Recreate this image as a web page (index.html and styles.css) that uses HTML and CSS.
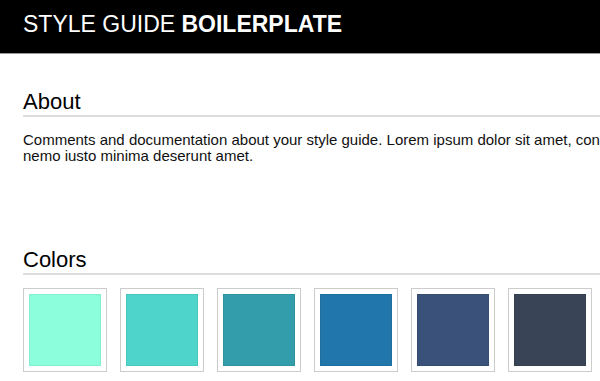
FILE: index.html
```html
<!DOCTYPE html>
<html lang="en">
<head>
  <meta charset="UTF-8">
  <title>Style Guide Boilerplate</title>
  <link rel="stylesheet" href="styles.css">
</head>
<body>
  <header class="sg-header">
    <h1>STYLE GUIDE <strong>BOILERPLATE</strong></h1>
  </header>

  <main class="sg-main">
    <section class="sg-section sg-about">
      <h2 class="sg-title">About</h2>
      <p>Comments and documentation about your style guide. Lorem ipsum dolor sit amet, consectetur adipisicing elit. Voluptatum, eligendi aperiam quis dolorem<br>
      nemo iusto minima deserunt amet.</p>
    </section>

    <section class="sg-section sg-colors">
      <h2 class="sg-title">Colors</h2>
      <div class="swatches">
        <div class="swatch"><div class="chip c1"></div></div>
        <div class="swatch"><div class="chip c2"></div></div>
        <div class="swatch"><div class="chip c3"></div></div>
        <div class="swatch"><div class="chip c4"></div></div>
        <div class="swatch"><div class="chip c5"></div></div>
        <div class="swatch"><div class="chip c6"></div></div>
        <div class="swatch"><div class="chip c7"></div></div>
      </div>
    </section>
  </main>
</body>
</html>
```

FILE: styles.css
```css
html, body {
  overflow: hidden;
}
body {
  margin: 0;
  font-family: "Liberation Sans", Arial, Helvetica, sans-serif;
  color: #111;
  background: #fff;
}
.sg-header {
  background: #000;
  border-bottom: 1px solid #999;
  height: 54px;
  box-sizing: border-box;
  padding: 12px 23px 0;
}
.sg-header h1 {
  margin: 0;
  font-size: 23px;
  line-height: 25px;
  font-weight: normal;
  color: #fff;
}
.sg-header strong {
  font-weight: bold;
}
.sg-main {
  width: 1200px;
  padding: 0 23px;
}
.sg-section {
  margin-top: 36px;
}
.sg-about {
  min-height: 122px;
}
.sg-title {
  margin: 0;
  font-size: 22px;
  line-height: 24px;
  font-weight: normal;
  color: #000;
  padding-bottom: 1px;
  border-bottom: 2px solid #ddd;
}
.sg-about p {
  margin: 15px 0 0;
  font-size: 15px;
  line-height: 16px;
  white-space: nowrap;
}
.swatches {
  display: flex;
  gap: 13px;
  margin-top: 13px;
}
.swatch {
  border: 1px solid #ccc;
  padding: 5px;
}
.chip {
  width: 72px;
  height: 72px;
  box-shadow: inset 0 0 0 1px rgba(0,0,0,0.06);
}
.c1 { background: #8cfedc; }
.c2 { background: #4ed4ca; }
.c3 { background: #349dab; }
.c4 { background: #2176ab; }
.c5 { background: #3a5179; }
.c6 { background: #394456; }
.c7 { background: #2c3e50; }
```
